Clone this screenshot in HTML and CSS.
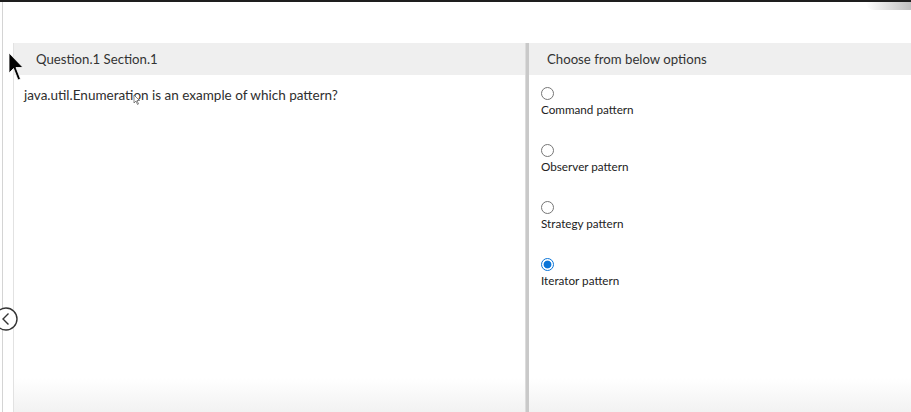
FILE: index.html
```html
<!DOCTYPE html>
<html>
<head>
<meta charset="utf-8">
<link rel="stylesheet" href="styles.css">
</head>
<body>
<div class="topline"></div>
<div class="shadow-tr"></div>
<div class="frame">
  <div class="panels">
    <section class="left">
      <div class="head">Question.1 Section.1</div>
      <div class="question">java.util.Enumeration is an example of which pattern?</div>
    </section>
    <div class="divider"></div>
    <section class="right">
      <div class="head">Choose from below options</div>
      <div class="options">
        <label class="opt"><span class="radio"></span><span class="txt">Command pattern</span></label>
        <label class="opt"><span class="radio"></span><span class="txt">Observer pattern</span></label>
        <label class="opt"><span class="radio"></span><span class="txt">Strategy pattern</span></label>
        <label class="opt"><span class="radio on"></span><span class="txt">Iterator pattern</span></label>
      </div>
    </section>
  </div>
</div>
<div class="back">
  <svg width="24" height="24" viewBox="0 0 24 24"><circle cx="12" cy="12" r="11" fill="#fff" stroke="#333" stroke-width="1.4"/><path d="M14.5 6.5 L9 12 L14.5 17.5" fill="none" stroke="#333" stroke-width="1.4"/></svg>
</div>
<svg class="cursor" width="17" height="30" viewBox="0 0 17 30"><path d="M1 1 L1 21 L5.5 16.5 L10 28 L12.5 27 L8 15.5 L15 15.5 Z" fill="#000" stroke="#fff" stroke-width="0.8"/></svg>
<svg class="cursor2" width="8" height="12" viewBox="0 0 8 12"><path d="M1 1 L1 9 L3 7 L4.5 10.5 L5.5 10 L4 6.5 L6.5 6.5 Z" fill="#fff" stroke="#555" stroke-width="0.7"/></svg>
</body>
</html>
```
FILE: styles.css
```css
html, body { margin: 0; padding: 0; }
body {
  width: 911px;
  height: 412px;
  overflow: hidden;
  background: #fff;
  font-family: "Lato", "Open Sans", sans-serif;
  color: #2e2e2e;
  position: relative;
}
.topline {
  height: 2px;
  background: #1e1e1e;
}
.shadow-tr {
  position: absolute;
  right: 0;
  top: 2px;
  width: 45px;
  height: 8px;
  background: linear-gradient(to right, rgba(255,255,255,0), rgba(150,150,150,0.6));
  border-bottom-left-radius: 20px;
}
.frame {
  margin-left: 2px;
  border-left: 1px solid #d4d4d4;
  height: 410px;
  box-sizing: border-box;
  padding-top: 41px;
  padding-left: 10px;
}
.panels {
  display: flex;
  height: 369px;
  border-left: 1px solid #e2e2e2;
}
.left, .right {
  background: linear-gradient(to bottom, #fff 0, #fff 335px, #f2f2f2 369px);
}
.left { width: 511px; }
.right { flex: 1; }
.divider {
  width: 3px;
  background: #c9c9c9;
  border-left: 1px solid #dcdcdc;
}
.head {
  height: 32px;
  line-height: 33px;
  background: #efefef;
  font-size: 13.2px;
  color: #333;
}
.left .head { padding-left: 22px; }
.right .head { padding-left: 18px; }
.question {
  padding: 11px 10px;
  font-size: 13.5px;
  line-height: 18px;
}
.options {
  display: flex;
  flex-direction: column;
  gap: 21px;
  padding: 12px 0 0 12px;
}
.opt {
  display: flex;
  flex-direction: column;
  align-items: flex-start;
  height: 36px;
}
.radio {
  width: 11px;
  height: 11px;
  border: 1px solid #767676;
  border-radius: 50%;
  background: #fff;
  display: block;
}
.radio.on {
  border-color: #0b75d8;
  background: radial-gradient(circle, #0b75d8 0, #0b75d8 3.5px, #fff 4.3px);
}
.txt {
  font-size: 11.7px;
  line-height: 16px;
  margin-top: 1px;
  color: #222;
}
.back {
  position: absolute;
  left: -6px;
  top: 307px;
  width: 24px;
  height: 24px;
}
.back svg { display: block; }
.cursor {
  position: absolute;
  left: 8px;
  top: 52px;
}
.cursor2 {
  position: absolute;
  left: 133px;
  top: 94px;
}
```
